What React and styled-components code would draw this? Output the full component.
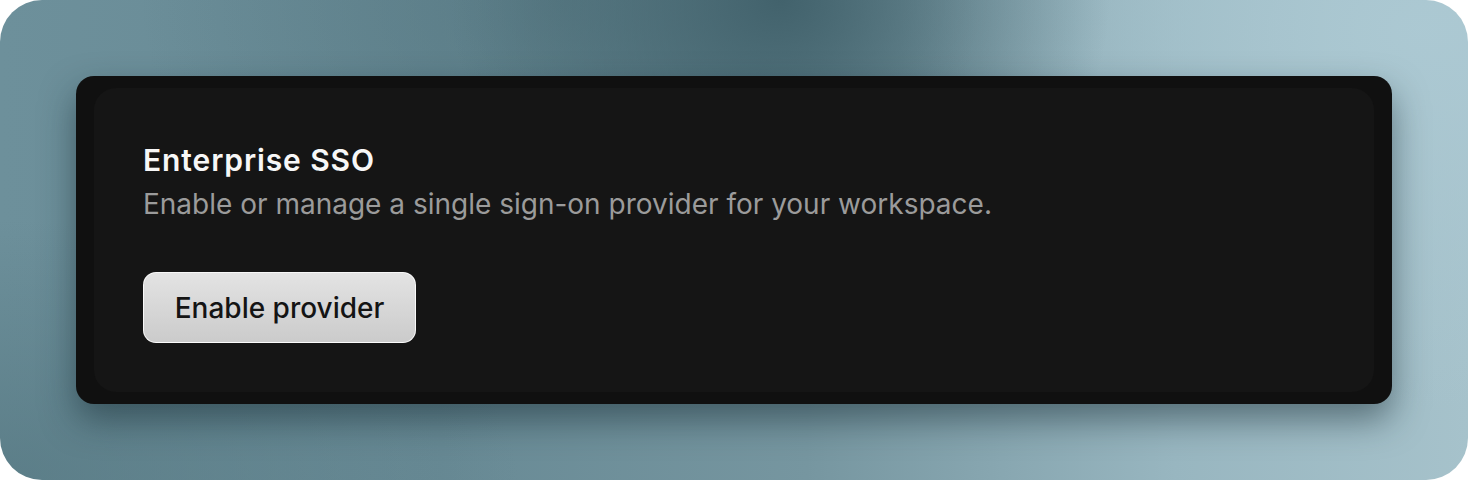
import React from "react";
import styled, { createGlobalStyle } from "styled-components";

const Global = createGlobalStyle`
  html, body { margin: 0; padding: 0; background: #ffffff; }
  body { font-family: Inter, "Noto Sans", sans-serif; -webkit-font-smoothing: antialiased; }
`;

const Frame = styled.div`
  width: 1468px;
  height: 480px;
  box-sizing: border-box;
  border-radius: 42px;
  overflow: hidden;
  padding: 76px;
  background:
    radial-gradient(ellipse 330px 280px at 780px 0px, rgba(64, 96, 106, 0.95), rgba(64, 96, 106, 0) 100%),
    radial-gradient(ellipse 420px 300px at 560px 0px, rgba(80, 114, 124, 0.6), rgba(80, 114, 124, 0) 100%),
    radial-gradient(ellipse 520px 380px at 1420px 30px, rgba(172, 201, 211, 0.95), rgba(172, 201, 211, 0) 100%),
    radial-gradient(ellipse 520px 260px at 0px 480px, rgba(84, 118, 128, 0.7), rgba(84, 118, 128, 0) 100%),
    linear-gradient(90deg, #6d909b 0%, #688a95 30%, #7696a0 55%, #98b6c0 80%, #a6c2cb 100%);
`;

const Card = styled.section`
  box-sizing: border-box;
  height: 328px;
  background: #101010;
  border-radius: 18px;
  padding: 12px 18px;
  box-shadow: 0 16px 34px rgba(20, 40, 48, 0.5);
`;

const Panel = styled.div`
  box-sizing: border-box;
  height: 100%;
  background: #151515;
  border-radius: 22px;
  padding: 52px 49px 49px;
  display: flex;
  flex-direction: column;
  align-items: flex-start;
`;

const Title = styled.h2`
  margin: 0;
  font-size: 30px;
  line-height: 40px;
  font-weight: 600;
  letter-spacing: 0.9px;
  color: #f7f7f7;
`;

const Subtitle = styled.p`
  margin: 4px 0 0;
  font-size: 28px;
  line-height: 40px;
  font-weight: 400;
  color: #9b9b9b;
`;

const Button = styled.button`
  margin-top: 48px;
  height: 72px;
  width: 273px;
  box-sizing: border-box;
  border-radius: 13px;
  border: 1px solid rgba(255, 255, 255, 0.85);
  background: linear-gradient(180deg, #e3e3e3 0%, #cbcbcb 100%);
  font-family: Inter, "Noto Sans", sans-serif;
  font-size: 28px;
  font-weight: 500;
  color: #141414;
  cursor: pointer;
  display: flex;
  align-items: center;
  justify-content: center;
  padding: 0;
`;

export default function App() {
  return (
    <>
      <Global />
      <Frame>
        <Card>
          <Panel>
            <Title>Enterprise SSO</Title>
            <Subtitle>Enable or manage a single sign-on provider for your workspace.</Subtitle>
            <Button>Enable provider</Button>
          </Panel>
        </Card>
      </Frame>
    </>
  );
}
